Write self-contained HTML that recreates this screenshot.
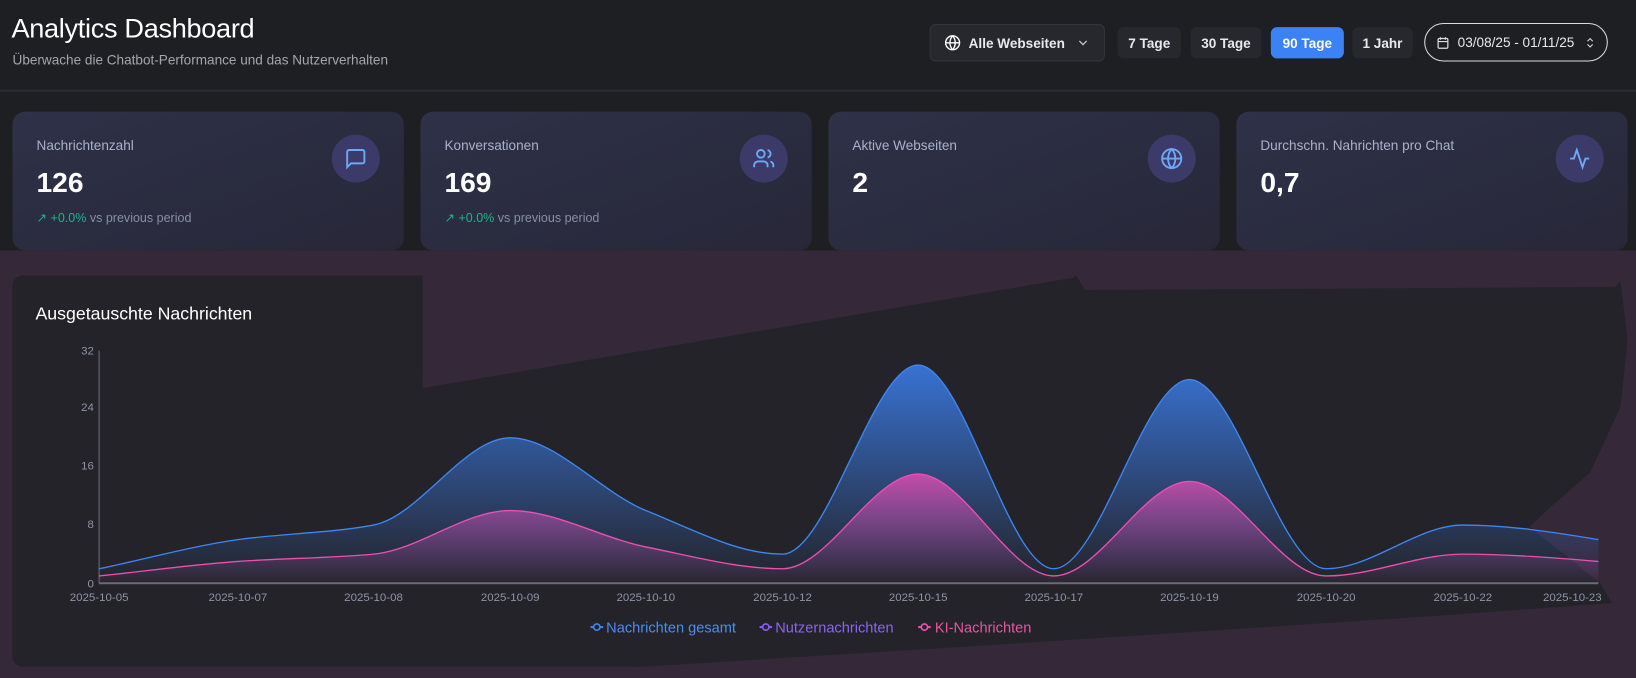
<!DOCTYPE html>
<html><head><meta charset="utf-8"><style>
*{box-sizing:border-box;margin:0;padding:0}
body{width:1636px;height:678px;overflow:hidden;background:#1e1f22;font-family:"Liberation Sans",sans-serif;color:#fff}
#w{position:relative;width:1568px;height:650px;transform:scale(1.04337);transform-origin:0 0}
.abs{position:absolute}
h1{position:absolute;left:11px;top:12px;font-size:26px;font-weight:normal;letter-spacing:-0.3px}
.sub{left:12px;top:50px;font-size:13px;color:#a4a6ae}
.div{left:0;top:86px;width:1568px;height:2px;background:#2c2a38}
.btn{position:absolute;background:#27272e;border-radius:6px;font-size:13px;font-weight:bold;color:#e8e8ee;display:flex;align-items:center;justify-content:center}
.card{position:absolute;top:107px;width:375px;height:133px;border-radius:12px;background:linear-gradient(160deg,#2e3148,#272738)}
.card .l{position:absolute;left:23px;top:25px;font-size:13px;color:#a9b2cb}
.card .n{position:absolute;left:23px;top:53px;font-size:27px;font-weight:bold}
.card .t{position:absolute;left:23px;top:95px;font-size:12px;color:#8890a6}
.card .t b{color:#21b58a;font-weight:normal}
.ic{position:absolute;right:23px;top:22px;width:46px;height:46px;border-radius:50%;background:#3b3a68;display:flex;align-items:center;justify-content:center}
</style></head><body><div id="w">
<h1>Analytics Dashboard</h1>
<div class="abs sub">Überwache die Chatbot-Performance und das Nutzerverhalten</div>
<div class="abs div"></div>

<div class="btn" style="left:891px;top:23px;width:168px;height:36px;border:1px solid #35353f">
<svg width="16" height="16" viewBox="0 0 24 24" fill="none" stroke="#fff" stroke-width="2" style="margin-right:7px"><circle cx="12" cy="12" r="10"/><path d="M2 12h20M12 2a15 15 0 0 1 0 20M12 2a15 15 0 0 0 0 20"/></svg>Alle Webseiten
<svg width="14" height="14" viewBox="0 0 24 24" fill="none" stroke="#ccc" stroke-width="2" style="margin-left:10px"><path d="M6 9l6 6 6-6"/></svg></div>
<div class="btn" style="left:1071px;top:26px;width:61px;height:30px">7 Tage</div>
<div class="btn" style="left:1141px;top:26px;width:68px;height:30px">30 Tage</div>
<div class="btn" style="left:1218px;top:26px;width:70px;height:30px;background:#3b82f6;color:#fff">90 Tage</div>
<div class="btn" style="left:1296px;top:26px;width:58px;height:30px">1 Jahr</div>
<div class="btn" style="left:1365px;top:22px;width:176px;height:37px;border:1px solid #ddd;border-radius:19px;background:transparent;font-weight:normal;font-size:13px">
<svg width="14" height="14" viewBox="0 0 24 24" fill="none" stroke="#ddd" stroke-width="2" style="margin-right:7px"><rect x="4" y="5" width="16" height="16" rx="2"/><path d="M4 10h16M8 3v4M16 3v4"/></svg>03/08/25 - 01/11/25
<svg width="12" height="14" viewBox="0 0 24 24" fill="none" stroke="#ddd" stroke-width="2" style="margin-left:9px"><path d="M7 9l5-5 5 5M7 15l5 5 5-5"/></svg></div>

<div class="card" style="left:12px"><div class="l">Nachrichtenzahl</div><div class="n">126</div><div class="t"><span style="color:#21b58a">↗</span> <b>+0.0%</b> vs previous period</div>
<div class="ic"><svg width="22" height="22" viewBox="0 0 24 24" fill="none" stroke="#6ea8f7" stroke-width="2"><path d="M21 15a2 2 0 0 1-2 2H7l-4 4V5a2 2 0 0 1 2-2h14a2 2 0 0 1 2 2z"/></svg></div></div>
<div class="card" style="left:403px"><div class="l">Konversationen</div><div class="n">169</div><div class="t"><span style="color:#21b58a">↗</span> <b>+0.0%</b> vs previous period</div>
<div class="ic"><svg width="22" height="22" viewBox="0 0 24 24" fill="none" stroke="#6ea8f7" stroke-width="2"><path d="M16 21v-2a4 4 0 0 0-4-4H6a4 4 0 0 0-4 4v2"/><circle cx="9" cy="7" r="4"/><path d="M22 21v-2a4 4 0 0 0-3-3.9M16 3.1a4 4 0 0 1 0 7.8"/></svg></div></div>
<div class="card" style="left:794px"><div class="l">Aktive Webseiten</div><div class="n">2</div>
<div class="ic"><svg width="22" height="22" viewBox="0 0 24 24" fill="none" stroke="#6ea8f7" stroke-width="2"><circle cx="12" cy="12" r="10"/><path d="M2 12h20M12 2a15 15 0 0 1 0 20M12 2a15 15 0 0 0 0 20"/></svg></div></div>
<div class="card" style="left:1185px"><div class="l">Durchschn. Nahrichten pro Chat</div><div class="n">0,7</div>
<div class="ic"><svg width="22" height="22" viewBox="0 0 24 24" fill="none" stroke="#6ea8f7" stroke-width="2"><path d="M22 12h-4l-3 9L9 3l-3 9H2"/></svg></div></div>

<svg class="abs" style="left:0;top:0" width="1568" height="650">
<defs>
<linearGradient id="gb" gradientUnits="userSpaceOnUse" x1="0" y1="345" x2="0" y2="559"><stop offset="0" stop-color="#3a78e0" stop-opacity=".95"/><stop offset="1" stop-color="#3a78e0" stop-opacity="0"/></linearGradient>
<linearGradient id="gp" gradientUnits="userSpaceOnUse" x1="0" y1="450" x2="0" y2="559"><stop offset="0" stop-color="#e04cb0" stop-opacity=".9"/><stop offset="1" stop-color="#9b4fa8" stop-opacity="0.05"/></linearGradient>
</defs>
<rect x="0" y="240" width="1568" height="410" fill="#352838"/>
<rect x="12" y="264" width="1550" height="375" rx="10" fill="#232329"/>
<polygon points="405,262 1030,262 1030,266 405,372" fill="#352838"/>
<polygon points="1030,262 1560,262 1548,275 1040,278" fill="#352838"/>
<polygon points="1553,262 1568,262 1568,650 1545,650 1545,578 1533,558 1466,505 1486,486 1524,453 1553,390 1560,326 1553,268" fill="#352838"/>
<polygon points="600,640 1000,615 1380,590 1545,578 1545,640" fill="#352838"/>
<g stroke="#6b6d78" stroke-width="1"><line x1="95" y1="336" x2="95" y2="559"/><line x1="95" y1="559" x2="1532" y2="559" stroke-width="2"/></g>
<g font-size="11" fill="#8f94a5" text-anchor="end" font-family="Liberation Sans"><text x="90" y="340">32</text><text x="90" y="394">24</text><text x="90" y="450">16</text><text x="90" y="506">8</text><text x="90" y="563">0</text></g>
<g font-size="11" fill="#8f94a5" text-anchor="middle" font-family="Liberation Sans"><text x="95" y="576">2025-10-05</text><text x="228" y="576">2025-10-07</text><text x="358" y="576">2025-10-08</text><text x="489" y="576">2025-10-09</text><text x="619" y="576">2025-10-10</text><text x="750" y="576">2025-10-12</text><text x="880" y="576">2025-10-15</text><text x="1010" y="576">2025-10-17</text><text x="1140" y="576">2025-10-19</text><text x="1271" y="576">2025-10-20</text><text x="1402" y="576">2025-10-22</text><text x="1507" y="576">2025-10-23</text></g>
<path d="M95,545.1 C139,536 184,523.4 228,517.2 C271,511.2 315,511.2 358,503.2 C401.7,495.2 445.3,419.6 489,419.6 C532.3,419.6 575.7,471.9 619,489.3 C662.7,506.7 706.3,531.1 750,531.1 C793.3,531.1 836.7,349.9 880,349.9 C923.3,349.9 966.7,545.1 1010,545.1 C1053.3,545.1 1096.7,363.8 1140,363.8 C1183.7,363.8 1227.3,545.1 1271,545.1 C1314.7,545.1 1358.3,503.2 1402,503.2 C1445.3,503.2 1488.7,510 1532,517.2 L1532,559 L95,559Z" fill="url(#gb)"/>
<path d="M95,552 C139,547.5 184,541.2 228,538.1 C271,535 315,535.1 358,531.1 C401.7,527.1 445.3,489.3 489,489.3 C532.3,489.3 575.7,515.5 619,524.2 C662.7,532.9 706.3,545.1 750,545.1 C793.3,545.1 836.7,454.4 880,454.4 C923.3,454.4 966.7,552 1010,552 C1053.3,552 1096.7,461.4 1140,461.4 C1183.7,461.4 1227.3,552 1271,552 C1314.7,552 1358.3,531.1 1402,531.1 C1445.3,531.1 1488.7,534.5 1532,538.1 L1532,559 L95,559Z" fill="url(#gp)"/>
<path d="M95,545.1 C139,536 184,523.4 228,517.2 C271,511.2 315,511.2 358,503.2 C401.7,495.2 445.3,419.6 489,419.6 C532.3,419.6 575.7,471.9 619,489.3 C662.7,506.7 706.3,531.1 750,531.1 C793.3,531.1 836.7,349.9 880,349.9 C923.3,349.9 966.7,545.1 1010,545.1 C1053.3,545.1 1096.7,363.8 1140,363.8 C1183.7,363.8 1227.3,545.1 1271,545.1 C1314.7,545.1 1358.3,503.2 1402,503.2 C1445.3,503.2 1488.7,510 1532,517.2" fill="none" stroke="#3f86f0" stroke-width="1.3"/>
<path d="M95,552 C139,547.5 184,541.2 228,538.1 C271,535 315,535.1 358,531.1 C401.7,527.1 445.3,489.3 489,489.3 C532.3,489.3 575.7,515.5 619,524.2 C662.7,532.9 706.3,545.1 750,545.1 C793.3,545.1 836.7,454.4 880,454.4 C923.3,454.4 966.7,552 1010,552 C1053.3,552 1096.7,461.4 1140,461.4 C1183.7,461.4 1227.3,552 1271,552 C1314.7,552 1358.3,531.1 1402,531.1 C1445.3,531.1 1488.7,534.5 1532,538.1" fill="none" stroke="#ec4fb0" stroke-width="1.3"/>
<text x="34" y="306" font-size="17" fill="#fff" font-family="Liberation Sans">Ausgetauschte Nachrichten</text>
<g font-size="14" font-family="Liberation Sans">
<line x1="566" y1="601" x2="578" y2="601" stroke="#3f86f0" stroke-width="2"/><circle cx="572" cy="601" r="3" fill="#232329" stroke="#3f86f0" stroke-width="1.5"/><text x="581" y="606" fill="#4a8df2">Nachrichten gesamt</text>
<line x1="728" y1="601" x2="740" y2="601" stroke="#8b5cf6" stroke-width="2"/><circle cx="734" cy="601" r="3" fill="#232329" stroke="#8b5cf6" stroke-width="1.5"/><text x="743" y="606" fill="#8b64f0">Nutzernachrichten</text>
<line x1="880" y1="601" x2="892" y2="601" stroke="#ec4fb0" stroke-width="2"/><circle cx="886" cy="601" r="3" fill="#232329" stroke="#ec4fb0" stroke-width="1.5"/><text x="896" y="606" fill="#e8559e">KI-Nachrichten</text>
</g>
</svg>
</div></body></html>
